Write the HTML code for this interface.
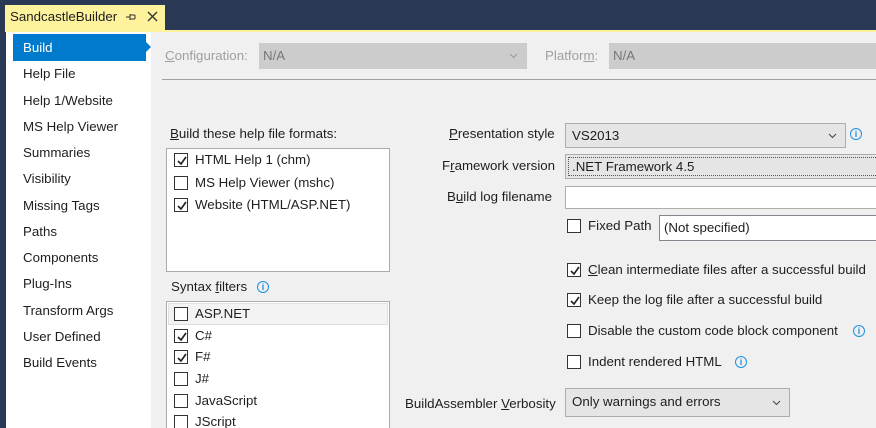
<!DOCTYPE html>
<html><head><meta charset="utf-8"><style>
*{margin:0;padding:0;box-sizing:border-box}
html{overflow:hidden;width:876px;height:428px}
body{width:876px;height:428px;overflow:hidden;background:#293955;font-family:"Liberation Sans",sans-serif;font-size:13.3px;color:#1e1e1e;position:relative}
.a{position:absolute}
.t{position:absolute;white-space:nowrap;line-height:16px}
.cb{position:absolute;width:14px;height:14px;border:1px solid #333;background:#fff}
.cb svg{position:absolute;left:1px;top:1px}
.info{position:absolute;width:12px;height:12px;border:1.3px solid #1e90e0;border-radius:50%;color:#1e90e0;font-size:9px;line-height:10px;text-align:center;font-weight:bold}
.combo{position:absolute;background:#e5e5e5;border:1px solid #adadad;overflow:hidden}
.chev{position:absolute;right:8px;top:50%;margin-top:-3px}
.nav{position:absolute;left:23px;line-height:16px;color:#1e1e1e}
u{text-decoration:underline}
</style></head><body>
<div class="a" style="left:5px;top:5px;width:160px;height:26px;background:#fff29d"></div>
<div class="t" style="left:10px;top:9px">SandcastleBuilder</div>
<svg class="a" style="left:125px;top:12px" width="12" height="10"><path d="M1 5H5M5 2V8M5 3H10M5 7H10M10 3V7" stroke="#333" fill="none"/></svg>
<svg class="a" style="left:147px;top:11px" width="11" height="11"><path d="M1 1L10 10M10 1L1 10" stroke="#333" stroke-width="1.4"/></svg>
<div class="a" style="left:5px;top:30px;width:871px;height:2px;background:#fff29d"></div>
<div class="a" style="left:6px;top:32px;width:145px;height:396px;background:#fff"></div>
<div class="a" style="left:151px;top:32px;width:725px;height:396px;background:#f0f0f0"></div>
<div class="a" style="left:13px;top:34px;width:133px;height:27px;background:#007acc"></div>
<div class="a" style="left:146px;top:42px;width:0;height:0;border-top:5px solid transparent;border-bottom:5px solid transparent;border-left:5px solid #007acc"></div>
<div class="nav" style="top:40px;color:#fff">Build</div>
<div class="nav" style="top:66px">Help File</div>
<div class="nav" style="top:93px">Help 1/Website</div>
<div class="nav" style="top:119px">MS Help Viewer</div>
<div class="nav" style="top:145px">Summaries</div>
<div class="nav" style="top:171px">Visibility</div>
<div class="nav" style="top:198px">Missing Tags</div>
<div class="nav" style="top:224px">Paths</div>
<div class="nav" style="top:250px">Components</div>
<div class="nav" style="top:276px">Plug-Ins</div>
<div class="nav" style="top:303px">Transform Args</div>
<div class="nav" style="top:329px">User Defined</div>
<div class="nav" style="top:355px">Build Events</div>

<div class="t" style="left:165px;top:48px;color:#a0a0a0"><u>C</u>onfiguration:</div>
<div class="combo" style="left:259px;top:43px;width:268px;height:26px;background:#ccc;border-color:#ccc"><div class="t" style="left:3px;top:4px;color:#777">N/A</div><svg class="chev" width="9" height="6"><path d="M1 1L4.5 4.5L8 1" stroke="#999" fill="none"/></svg></div>
<div class="t" style="left:545px;top:48px;color:#a0a0a0">Platfor<u>m</u>:</div>
<div class="combo" style="left:609px;top:43px;width:280px;height:26px;background:#ccc;border-color:#ccc"><div class="t" style="left:3px;top:4px;color:#777">N/A</div></div>
<div class="a" style="left:162px;top:79px;width:714px;height:1px;background:#a0a0a0"></div>

<div class="t" style="left:170px;top:126px"><u>B</u>uild these help file formats:</div>
<div class="a" style="left:166px;top:148px;width:224px;height:124px;background:#fff;border:1px solid #ababab"></div>
<div class="cb" style="left:174px;top:153px"><svg width="12" height="12"><path d="M2 6L5 9L10 2" stroke="#222" stroke-width="1.7" fill="none"/></svg></div>
<div class="t" style="left:195px;top:152px">HTML Help 1 (chm)</div>
<div class="cb" style="left:174px;top:176px"></div>
<div class="t" style="left:195px;top:175px">MS Help Viewer (mshc)</div>
<div class="cb" style="left:174px;top:198px"><svg width="12" height="12"><path d="M2 6L5 9L10 2" stroke="#222" stroke-width="1.7" fill="none"/></svg></div>
<div class="t" style="left:195px;top:197px">Website (HTML/ASP.NET)</div>

<div class="t" style="left:171px;top:279px">Syntax <u>f</u>ilters</div>
<div class="info" style="left:257px;top:281px">i</div>
<div class="a" style="left:166px;top:301px;width:224px;height:127px;background:#fff;border:1px solid #ababab;border-bottom:none"></div>
<div class="a" style="left:168px;top:303px;width:220px;height:22px;background:#f3f3f3;border:1px solid #e0e0e0"></div>
<div class="cb" style="left:174px;top:307px"></div><div class="t" style="left:195px;top:306px">ASP.NET</div>
<div class="cb" style="left:174px;top:329px"><svg width="12" height="12"><path d="M2 6L5 9L10 2" stroke="#222" stroke-width="1.7" fill="none"/></svg></div><div class="t" style="left:195px;top:328px">C#</div>
<div class="cb" style="left:174px;top:350px"><svg width="12" height="12"><path d="M2 6L5 9L10 2" stroke="#222" stroke-width="1.7" fill="none"/></svg></div><div class="t" style="left:195px;top:349px">F#</div>
<div class="cb" style="left:174px;top:372px"></div><div class="t" style="left:195px;top:371px">J#</div>
<div class="cb" style="left:174px;top:394px"></div><div class="t" style="left:195px;top:393px">JavaScript</div>
<div class="cb" style="left:174px;top:415px"></div><div class="t" style="left:195px;top:414px">JScript</div>

<div class="t" style="left:449px;top:126px"><u>P</u>resentation style</div>
<div class="combo" style="left:565px;top:123px;width:281px;height:25px"><div class="t" style="left:6px;top:4px">VS2013</div><svg class="chev" width="9" height="6"><path d="M1 1L4.5 4.5L8 1" stroke="#444" fill="none"/></svg></div>
<div class="info" style="left:850px;top:128px">i</div>
<div class="t" style="left:442px;top:158px">F<u>r</u>amework version</div>
<div class="combo" style="left:565px;top:154px;width:320px;height:25px"><div class="a" style="left:2px;top:2px;right:2px;bottom:2px;border:1px dotted #555"></div><div class="t" style="left:6px;top:4px">.NET Framework 4.5</div></div>
<div class="t" style="left:447px;top:189px">B<u>u</u>ild log filename</div>
<div class="a" style="left:565px;top:186px;width:320px;height:23px;background:#fff;border:1px solid #adadad"></div>
<div class="cb" style="left:567px;top:219px"></div>
<div class="t" style="left:588px;top:218px">Fixed Path</div>
<div class="a" style="left:659px;top:215px;width:230px;height:26px;background:#fff;border:1px solid #828790"></div>
<div class="t" style="left:664px;top:220px">(Not specified)</div>

<div class="cb" style="left:567px;top:263px"><svg width="12" height="12"><path d="M2 6L5 9L10 2" stroke="#222" stroke-width="1.7" fill="none"/></svg></div>
<div class="t" style="left:588px;top:262px"><u>C</u>lean intermediate files after a successful build</div>
<div class="cb" style="left:567px;top:293px"><svg width="12" height="12"><path d="M2 6L5 9L10 2" stroke="#222" stroke-width="1.7" fill="none"/></svg></div>
<div class="t" style="left:588px;top:292px">Keep the log file after a successful build</div>
<div class="cb" style="left:567px;top:324px"></div>
<div class="t" style="left:588px;top:323px">Disable the custom code block component</div>
<div class="info" style="left:853px;top:325px">i</div>
<div class="cb" style="left:567px;top:355px"></div>
<div class="t" style="left:588px;top:354px">Indent rendered HTML</div>
<div class="info" style="left:735px;top:356px">i</div>

<div class="t" style="left:405px;top:396px">BuildAssembler <u>V</u>erbosity</div>
<div class="combo" style="left:565px;top:388px;width:225px;height:29px"><div class="t" style="left:6px;top:5px">Only warnings and errors</div><svg class="chev" width="9" height="6"><path d="M1 1L4.5 4.5L8 1" stroke="#444" fill="none"/></svg></div>
</body></html>
